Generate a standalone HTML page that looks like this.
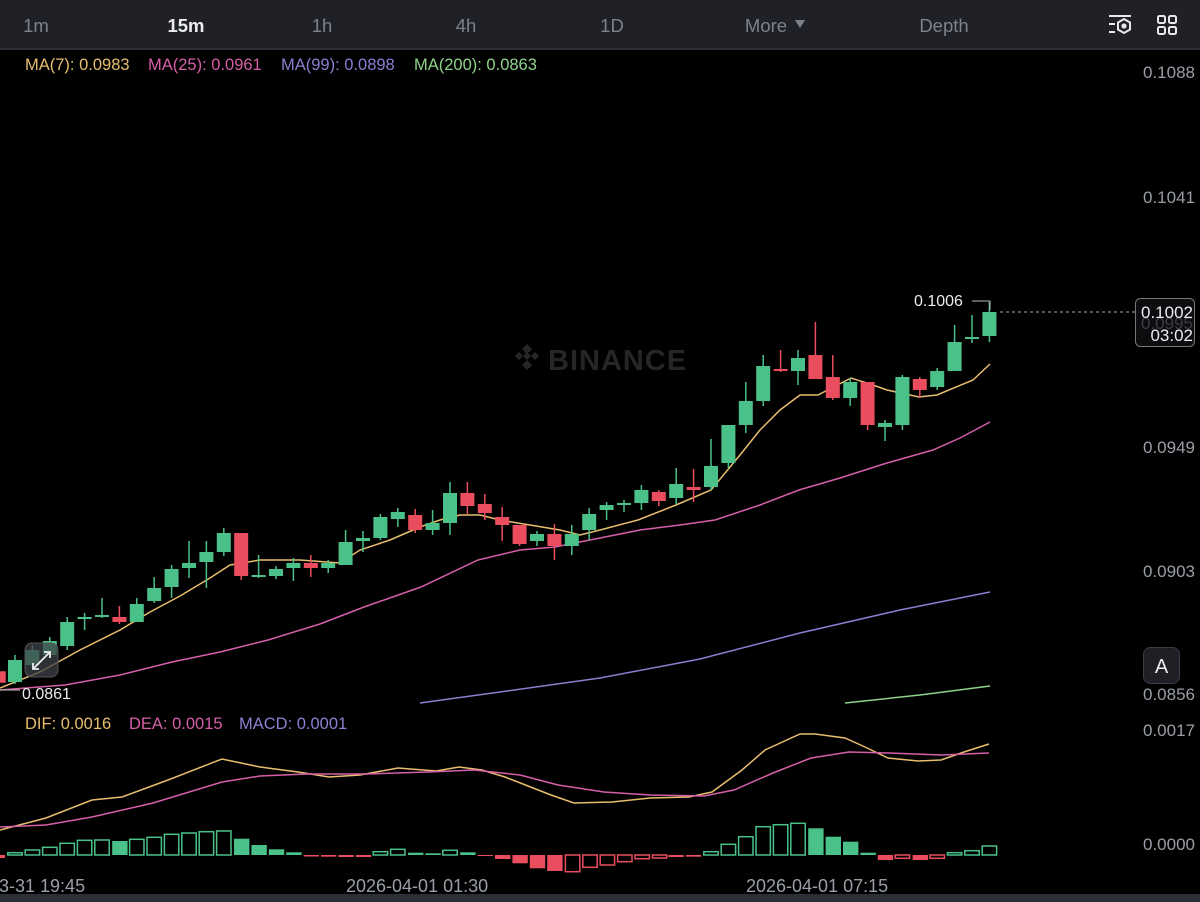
<!DOCTYPE html>
<html><head><meta charset="utf-8"><style>
html,body{margin:0;padding:0;background:#000;width:1200px;height:902px;overflow:hidden;font-family:"Liberation Sans",sans-serif}
svg text{font-family:"Liberation Sans",sans-serif}
</style></head><body>
<svg width="1200" height="902" viewBox="0 0 1200 902" xmlns="http://www.w3.org/2000/svg">
<rect width="1200" height="902" fill="#000"/>
<rect x="0" y="0" width="1200" height="48" fill="#1f2126"/>
<rect x="0" y="48" width="1200" height="2" fill="#2b2e35"/>
<g font-size="18.5" fill="#7d828c" text-anchor="middle">
<text x="36" y="32">1m</text>
<text x="186" y="32" fill="#eaecef" font-weight="bold">15m</text>
<text x="322" y="32">1h</text>
<text x="466" y="32">4h</text>
<text x="612" y="32">1D</text>
<text x="766" y="32">More</text>
<text x="944" y="32">Depth</text>
</g>
<path d="M795 20 L805 20 L800 28 Z" fill="#7d828c"/>
<g stroke="#e6e8ea" stroke-width="2" fill="none">
<line x1="1109" y1="16" x2="1131" y2="16"/>
<line x1="1109" y1="24" x2="1115" y2="24"/>
<line x1="1109" y1="32" x2="1115" y2="32"/>
<path d="M1124 19 L1130 22.5 L1130 29.5 L1124 33 L1118 29.5 L1118 22.5 Z"/>
<circle cx="1124" cy="26" r="1.6" fill="#e6e8ea"/>
<rect x="1158" y="16" width="7" height="7" rx="1.5"/>
<rect x="1169" y="16" width="7" height="7" rx="1.5"/>
<rect x="1158" y="27" width="7" height="7" rx="1.5"/>
<rect x="1169" y="27" width="7" height="7" rx="1.5"/>
</g>
<g font-size="16.5">
<text x="25" y="70" fill="#e8be6e">MA(7): 0.0983</text>
<text x="148" y="70" fill="#d55fa8">MA(25): 0.0961</text>
<text x="281" y="70" fill="#8a7fd0">MA(99): 0.0898</text>
<text x="414" y="70" fill="#8fd38a">MA(200): 0.0863</text>
</g>
<g font-size="17" fill="#9a9ea6" text-anchor="end">
<text x="1195" y="78">0.1088</text>
<text x="1195" y="203">0.1041</text>
<text x="1195" y="453">0.0949</text>
<text x="1195" y="577">0.0903</text>
<text x="1195" y="700">0.0856</text>
<text x="1195" y="736">0.0017</text>
<text x="1195" y="850">0.0000</text>
</g>
<g fill="#262626">
<path d="M527 344 L532 349 L527 354 L522 349 Z M519 352 L523 356 L519 360 L515 356 Z M535 352 L539 356 L535 360 L531 356 Z M527 360 L532 365 L527 370 L522 365 Z M527 352 L531 356 L527 360 L523 356 Z"/>
<text x="548" y="370" font-size="29" font-weight="bold" letter-spacing="1">BINANCE</text>
</g>
<polyline fill="none" stroke="#8a7fd0" stroke-width="1.5" points="420,703 500,692 600,678 700,659 800,633 900,610 990,592"/>
<polyline fill="none" stroke="#8fd38a" stroke-width="1.5" points="845,703 920,695 990,686"/>
<polyline fill="none" stroke="#d55fa8" stroke-width="1.5" points="0,690 65,685 120,675 172,662 220,652 268,640 320,624 364,607 421,587 478,560 520,550 555,547 600,538 640,530 680,525 715,520 760,505 799,490 840,478 887,463 933,450 960,438 990,422"/>
<polyline fill="none" stroke="#e8be6e" stroke-width="1.5" points="0,688 40,672 80,650 120,630 150,612 180,596 210,578 230,565 260,560 300,560 340,563 360,550 390,540 420,527 440,520 460,515 480,515 500,520 530,525 560,530 580,535 600,530 638,520 676,505 711,490 740,455 760,430 780,410 800,395 818,395 851,378 870,384 887,390 919,397 937,395 973,380 990,364"/>
<g stroke-width="1.5">
<g fill="#ea4e5e" stroke="#ea4e5e"><rect x="-4" y="672" width="9" height="10"/></g>
<g fill="#4bc18a" stroke="#4bc18a">
<line x1="15" y1="655" x2="15" y2="684"/><rect x="8" y="660" width="14" height="22" stroke="none"/>
<line x1="32.4" y1="645" x2="32.4" y2="668"/><rect x="25.4" y="650" width="14" height="15" stroke="none"/>
<line x1="49.8" y1="637" x2="49.8" y2="658"/><rect x="42.8" y="641" width="14" height="14" stroke="none"/>
<line x1="67.2" y1="617" x2="67.2" y2="650"/><rect x="60.2" y="622" width="14" height="24" stroke="none"/>
<line x1="84.6" y1="613" x2="84.6" y2="630"/><rect x="77.6" y="617" width="14" height="2" stroke="none"/>
<line x1="102" y1="598" x2="102" y2="618"/><rect x="95" y="615" width="14" height="2" stroke="none"/>
<line x1="136.8" y1="598" x2="136.8" y2="622"/><rect x="129.8" y="604" width="14" height="18" stroke="none"/>
<line x1="154.2" y1="577" x2="154.2" y2="603"/><rect x="147.2" y="588" width="14" height="13" stroke="none"/>
<line x1="171.6" y1="565" x2="171.6" y2="598"/><rect x="164.6" y="569" width="14" height="18" stroke="none"/>
<line x1="189" y1="541" x2="189" y2="578"/><rect x="182" y="563" width="14" height="5" stroke="none"/>
<line x1="206.4" y1="541" x2="206.4" y2="588"/><rect x="199.4" y="552" width="14" height="10" stroke="none"/>
<line x1="223.8" y1="528" x2="223.8" y2="556"/><rect x="216.8" y="533" width="14" height="19" stroke="none"/>
<line x1="258.6" y1="555" x2="258.6" y2="578"/><rect x="251.6" y="575" width="14" height="2" stroke="none"/>
<line x1="276" y1="566" x2="276" y2="579"/><rect x="269" y="569" width="14" height="7" stroke="none"/>
<line x1="293.4" y1="558" x2="293.4" y2="581"/><rect x="286.4" y="563" width="14" height="5" stroke="none"/>
<line x1="328.2" y1="560" x2="328.2" y2="573"/><rect x="321.2" y="563" width="14" height="5" stroke="none"/>
<line x1="345.6" y1="530" x2="345.6" y2="565"/><rect x="338.6" y="542" width="14" height="23" stroke="none"/>
<line x1="363" y1="531" x2="363" y2="552"/><rect x="356" y="538" width="14" height="3" stroke="none"/>
<line x1="380.4" y1="514" x2="380.4" y2="540"/><rect x="373.4" y="517" width="14" height="21" stroke="none"/>
<line x1="397.8" y1="508" x2="397.8" y2="527"/><rect x="390.8" y="512" width="14" height="7" stroke="none"/>
<line x1="432.6" y1="510" x2="432.6" y2="535"/><rect x="425.6" y="523" width="14" height="7" stroke="none"/>
<line x1="450" y1="482" x2="450" y2="535"/><rect x="443" y="493" width="14" height="30" stroke="none"/>
<line x1="537" y1="531" x2="537" y2="546"/><rect x="530" y="534" width="14" height="7" stroke="none"/>
<line x1="571.8" y1="525" x2="571.8" y2="555"/><rect x="564.8" y="534" width="14" height="12" stroke="none"/>
<line x1="589.2" y1="508" x2="589.2" y2="540"/><rect x="582.2" y="514" width="14" height="16" stroke="none"/>
<line x1="606.6" y1="502" x2="606.6" y2="520"/><rect x="599.6" y="505" width="14" height="5" stroke="none"/>
<line x1="624" y1="500" x2="624" y2="512"/><rect x="617" y="503" width="14" height="2" stroke="none"/>
<line x1="641.4" y1="485" x2="641.4" y2="510"/><rect x="634.4" y="490" width="14" height="13" stroke="none"/>
<line x1="676.2" y1="468" x2="676.2" y2="504"/><rect x="669.2" y="484" width="14" height="14" stroke="none"/>
<line x1="711" y1="439" x2="711" y2="490"/><rect x="704" y="466" width="14" height="21" stroke="none"/>
<line x1="728.4" y1="425" x2="728.4" y2="468"/><rect x="721.4" y="425" width="14" height="38" stroke="none"/>
<line x1="745.8" y1="382" x2="745.8" y2="433"/><rect x="738.8" y="401" width="14" height="24" stroke="none"/>
<line x1="763.2" y1="355" x2="763.2" y2="406"/><rect x="756.2" y="366" width="14" height="35" stroke="none"/>
<line x1="798" y1="350" x2="798" y2="385"/><rect x="791" y="358" width="14" height="13" stroke="none"/>
<line x1="850.2" y1="378" x2="850.2" y2="406"/><rect x="843.2" y="382" width="14" height="16" stroke="none"/>
<line x1="885" y1="420" x2="885" y2="441"/><rect x="878" y="423" width="14" height="4" stroke="none"/>
<line x1="902.4" y1="375" x2="902.4" y2="430"/><rect x="895.4" y="377" width="14" height="48" stroke="none"/>
<line x1="937.2" y1="368" x2="937.2" y2="390"/><rect x="930.2" y="371" width="14" height="16" stroke="none"/>
<line x1="954.6" y1="325" x2="954.6" y2="371"/><rect x="947.6" y="342" width="14" height="29" stroke="none"/>
<line x1="972" y1="315" x2="972" y2="343"/><rect x="965" y="337" width="14" height="2" stroke="none"/>
<line x1="989.4" y1="302" x2="989.4" y2="342"/><rect x="982.4" y="312" width="14" height="24" stroke="none"/>
</g>
<g fill="#ea4e5e" stroke="#ea4e5e">
<line x1="119.4" y1="606" x2="119.4" y2="624"/><rect x="112.4" y="617" width="14" height="5" stroke="none"/>
<line x1="241.2" y1="533" x2="241.2" y2="580"/><rect x="234.2" y="533" width="14" height="43" stroke="none"/>
<line x1="310.8" y1="555" x2="310.8" y2="577"/><rect x="303.8" y="563" width="14" height="5" stroke="none"/>
<line x1="415.2" y1="509" x2="415.2" y2="533"/><rect x="408.2" y="515" width="14" height="15" stroke="none"/>
<line x1="467.4" y1="482" x2="467.4" y2="514"/><rect x="460.4" y="493" width="14" height="13" stroke="none"/>
<line x1="484.8" y1="494" x2="484.8" y2="520"/><rect x="477.8" y="504" width="14" height="9" stroke="none"/>
<line x1="502.2" y1="507" x2="502.2" y2="541"/><rect x="495.2" y="517" width="14" height="8" stroke="none"/>
<line x1="519.6" y1="525" x2="519.6" y2="546"/><rect x="512.6" y="525" width="14" height="19" stroke="none"/>
<line x1="554.4" y1="524" x2="554.4" y2="560"/><rect x="547.4" y="534" width="14" height="12" stroke="none"/>
<line x1="658.8" y1="490" x2="658.8" y2="506"/><rect x="651.8" y="492" width="14" height="9" stroke="none"/>
<line x1="693.6" y1="469" x2="693.6" y2="502"/><rect x="686.6" y="487" width="14" height="3" stroke="none"/>
<line x1="780.6" y1="350" x2="780.6" y2="372"/><rect x="773.6" y="369" width="14" height="2" stroke="none"/>
<line x1="815.4" y1="322" x2="815.4" y2="379"/><rect x="808.4" y="355" width="14" height="24" stroke="none"/>
<line x1="832.8" y1="355" x2="832.8" y2="400"/><rect x="825.8" y="377" width="14" height="21" stroke="none"/>
<line x1="867.6" y1="382" x2="867.6" y2="430"/><rect x="860.6" y="382" width="14" height="43" stroke="none"/>
<line x1="919.8" y1="377" x2="919.8" y2="398"/><rect x="912.8" y="379" width="14" height="11" stroke="none"/>
</g>
</g>
<text x="914" y="306" font-size="16" fill="#eaecef">0.1006</text>
<polyline points="972,301 990,301 990,310" fill="none" stroke="#bbb" stroke-width="1"/>
<line x1="1000" y1="312" x2="1135" y2="312" stroke="#aaa" stroke-width="1" stroke-dasharray="3,3"/>
<rect x="1135.5" y="298.5" width="59" height="48" rx="5" fill="#0c0d0f" stroke="#777" stroke-width="1"/>
<text x="1193" y="329" font-size="17" fill="#3a3c40" text-anchor="end">0.0995</text>
<text x="1193" y="318" font-size="17" fill="#eaecef" text-anchor="end">0.1002</text>
<text x="1193" y="341" font-size="17" fill="#eaecef" text-anchor="end">03:02</text>
<line x1="0" y1="690" x2="20" y2="690" stroke="#bbb" stroke-width="1"/>
<text x="22" y="699" font-size="16" fill="#eaecef">0.0861</text>
<rect x="25" y="643" width="33" height="34" rx="7" fill="rgba(60,64,70,0.75)" stroke="#555" stroke-width="1"/>
<g stroke="#eee" stroke-width="1.8" fill="none">
<line x1="33" y1="669" x2="50" y2="652"/>
<polyline points="44,652 50,652 50,658"/>
<polyline points="33,663 33,669 39,669"/>
</g>
<rect x="1143.5" y="647.5" width="36" height="36" rx="7" fill="#1e2025" stroke="#3a3d44"/>
<text x="1161.5" y="673" font-size="20" fill="#eaecef" text-anchor="middle">A</text>
<g font-size="16.5">
<text x="25" y="729" fill="#e8be6e">DIF: 0.0016</text>
<text x="129" y="729" fill="#d55fa8">DEA: 0.0015</text>
<text x="239" y="729" fill="#8a7fd0">MACD: 0.0001</text>
</g>
<polyline fill="none" stroke="#e8be6e" stroke-width="1.5" points="0,830 46,818 92,800 122,797 168,780 222,759 260,767 298,772 329,777 360,775 398,768 436,771 459,767 482,770 505,777 528,786 551,795 574,803 612,802 650,798 689,797 712,792 742,770 765,750 800,734 815,734 845,738 865,747 888,758 918,761 941,760 964,752 989,744"/>
<polyline fill="none" stroke="#d55fa8" stroke-width="1.5" points="0,827 46,825 92,817 153,803 222,782 260,776 306,774 367,774 428,772 474,770 520,775 558,785 604,792 650,795 704,796 734,790 773,773 811,758 849,752 888,753 941,755 989,753"/>
<g stroke-width="1.5">
<g fill="none" stroke="#4bc18a">
<rect x="7.8" y="852.7" width="14.4" height="2.3"/><rect x="25.2" y="850" width="14.4" height="5"/><rect x="42.6" y="847.3" width="14.4" height="7.7"/><rect x="60" y="843.3" width="14.4" height="11.7"/><rect x="77.4" y="840.3" width="14.4" height="14.7"/><rect x="94.8" y="840" width="14.4" height="15"/>
<rect x="129.6" y="839.3" width="14.4" height="15.7"/><rect x="147" y="837.3" width="14.4" height="17.7"/><rect x="164.4" y="834.3" width="14.4" height="20.7"/><rect x="181.8" y="833" width="14.4" height="22"/><rect x="199.2" y="831.7" width="14.4" height="23.3"/><rect x="216.6" y="831" width="14.4" height="24"/>
<rect x="373.2" y="851.7" width="14.4" height="3.3"/><rect x="390.6" y="849.3" width="14.4" height="5.7"/><rect x="442.8" y="850.3" width="14.4" height="4.7"/>
<rect x="703.8" y="851.7" width="14.4" height="3.3"/><rect x="721.2" y="844.3" width="14.4" height="10.7"/><rect x="738.6" y="836.7" width="14.4" height="18.3"/><rect x="756" y="826.7" width="14.4" height="28.3"/><rect x="773.4" y="824.7" width="14.4" height="30.3"/><rect x="790.8" y="823.3" width="14.4" height="31.7"/>
<rect x="947.4" y="852.7" width="14.4" height="2.3"/><rect x="964.8" y="850.7" width="14.4" height="4.3"/><rect x="982.2" y="846" width="14.4" height="9"/>
</g>
<g fill="#4bc18a" stroke="none">
<rect x="112.2" y="841" width="15.4" height="14"/><rect x="234" y="838.7" width="15.4" height="16.3"/><rect x="251.4" y="845" width="15.4" height="10"/><rect x="268.8" y="849.3" width="15.4" height="5.7"/><rect x="286.2" y="852.3" width="15.4" height="2.7"/>
<rect x="408" y="852.7" width="15.4" height="2.3"/><rect x="425.4" y="853.3" width="15.4" height="1.7"/><rect x="460.2" y="852.3" width="15.4" height="2.7"/>
<rect x="808.2" y="828.3" width="15.4" height="26.7"/><rect x="825.6" y="836.7" width="15.4" height="18.3"/><rect x="843" y="841.7" width="15.4" height="13.3"/><rect x="860.4" y="852.7" width="15.4" height="2.3"/>
</g>
<g fill="#ea4e5e" stroke="none">
<rect x="0" y="855" width="5" height="3"/>
<rect x="303.6" y="855" width="15.4" height="1.5"/><rect x="321" y="855" width="15.4" height="1.7"/><rect x="338.4" y="855" width="15.4" height="2"/><rect x="355.8" y="855" width="15.4" height="2"/>
<rect x="477.6" y="855" width="15.4" height="1"/><rect x="495" y="855" width="15.4" height="4"/><rect x="512.4" y="855" width="15.4" height="8.3"/><rect x="529.8" y="855" width="15.4" height="13.3"/><rect x="547.2" y="855" width="15.4" height="16"/>
<rect x="668.4" y="855" width="15.4" height="2"/><rect x="685.8" y="855" width="15.4" height="1.7"/>
<rect x="877.8" y="855" width="15.4" height="5"/><rect x="912.6" y="855" width="15.4" height="5"/>
</g>
<g fill="none" stroke="#ea4e5e">
<rect x="565.4" y="855" width="14.4" height="16.7"/><rect x="582.8" y="855" width="14.4" height="12.3"/><rect x="600.2" y="855" width="14.4" height="10"/><rect x="617.6" y="855" width="14.4" height="6.7"/><rect x="635" y="855" width="14.4" height="3.7"/><rect x="652.4" y="855" width="14.4" height="3"/>
<rect x="895.2" y="855" width="14.4" height="3.3"/><rect x="930" y="855" width="14.4" height="3.3"/>
</g>
</g>
<g font-size="18" fill="#9a9ea6">
<text x="-11" y="892">03-31 19:45</text>
<text x="346" y="892">2026-04-01 01:30</text>
<text x="746" y="892">2026-04-01 07:15</text>
</g>
<rect x="0" y="894" width="1200" height="8" fill="#2b2e34"/>
</svg>
</body></html>
